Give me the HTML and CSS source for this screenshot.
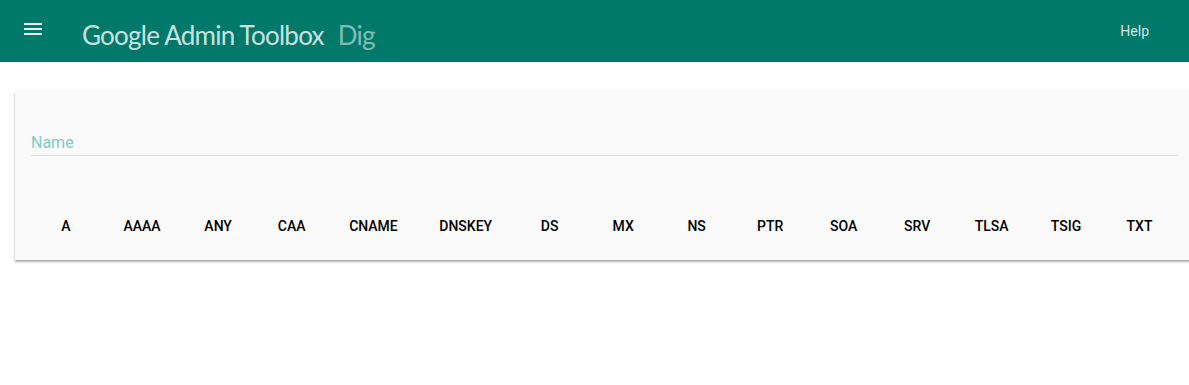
FILE: index.html
```html
<!DOCTYPE html>
<html lang="en">

<head>
    <meta charset="UTF-8">
    <meta name="viewport" content="width=device-width, initial-scale=1.0">
    <title>Google Admin Toolbox Dig</title>
    <link rel="stylesheet" href="styles.css">
</head>

<body>
    <!-- Top bar -->
    <header class="toolbar">
        <button class="menu-btn" aria-label="Menu">
            <svg viewBox="0 0 24 24" width="24" height="24">
                <path d="M3 18h18v-2H3v2zm0-5h18v-2H3v2zm0-7v2h18V6H3z" fill="currentColor" />
            </svg>
        </button>
        <div class="brand">
            <span class="brand-name">Google Admin Toolbox</span>
            <span class="brand-tool">Dig</span>
        </div>
        <a class="help" href="#">Help</a>
    </header>

    <!-- Query card -->
    <main class="content">
        <div class="card">
            <div class="field">
                <input type="text" placeholder="Name">
            </div>
            <div class="types">
                <button>A</button>
                <button>AAAA</button>
                <button>ANY</button>
                <button>CAA</button>
                <button>CNAME</button>
                <button>DNSKEY</button>
                <button>DS</button>
                <button>MX</button>
                <button>NS</button>
                <button>PTR</button>
                <button>SOA</button>
                <button>SRV</button>
                <button>TLSA</button>
                <button>TSIG</button>
                <button>TXT</button>
            </div>
        </div>
    </main>
</body>

</html>
```

FILE: styles.css
```css
html {
    overflow: hidden;
}

body {
    margin: 0;
    font-family: Roboto, 'Noto Sans', sans-serif;
    background: #fff;
}

/* Top bar */
.toolbar {
    display: flex;
    align-items: center;
    height: 62px;
    background-color: #00796b;
    padding: 0 40px 0 21px;
    color: #fff;
}

.menu-btn {
    display: flex;
    padding: 0;
    margin-top: -4px;
    border: none;
    background: none;
    color: rgba(255, 255, 255, 0.9);
    cursor: pointer;
}

.brand {
    margin-left: 37px;
    margin-top: 8px;
    display: flex;
    align-items: baseline;
    gap: 14px;
    font-family: Lato, sans-serif;
    font-size: 26px;
    letter-spacing: -0.75px;
}

.brand-name {
    color: rgba(255, 255, 255, 0.8);
}

.brand-tool {
    color: rgba(255, 255, 255, 0.5);
}

.help {
    margin-left: auto;
    color: rgba(255, 255, 255, 0.85);
    font-size: 14px;
    text-decoration: none;
}

/* Card */
.content {
    padding: 30px 0 24px 15px;
    margin-right: -5px;
}

.card {
    background: #fafafa;
    padding: 41px 16px 16px 16px;
    box-shadow: 0 2px 2px rgba(0, 0, 0, 0.3), 0 0 2px rgba(0, 0, 0, 0.12);
}

.field {
    border-bottom: 1px solid #ddd;
    padding-bottom: 2px;
}

.field input {
    display: block;
    width: 100%;
    border: none;
    background: transparent;
    padding: 0;
    font-family: Roboto, sans-serif;
    font-size: 16px;
    line-height: 20px;
    height: 20px;
    outline: none;
}

.field input::placeholder {
    color: #80cbc4;
}

.types {
    display: flex;
    gap: 9.5px;
    margin-top: 52px;
    padding-left: 3px;
}

.types button {
    min-width: 64px;
    height: 36px;
    padding: 0 16px;
    border: none;
    background: transparent;
    font-family: Roboto, sans-serif;
    font-size: 14px;
    font-weight: 500;
    color: #000;
    border-radius: 2px;
    cursor: pointer;
}

.types button:hover {
    background: rgba(0, 0, 0, 0.06);
}
```
